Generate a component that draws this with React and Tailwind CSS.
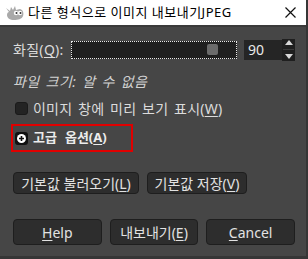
import React from 'react';

const font = "font-['Noto_Sans','Noto_Sans_CJK_KR',sans-serif]";

const U = ({ children }) => <span className="underline underline-offset-2">{children}</span>;

const Wilber = () => (
  <svg width="20" height="16" viewBox="0 0 20 16" className="shrink-0">
    <path d="M1 3 L5 6 L6 2 L8 5 L10 1 L11 5 L15 4 C18 5 19 8 18 11 C17 14 13 15 9 15 C5 15 2 13 2 10 C2 8 3 7 4 7 Z" fill="#a9a9a9" />
    <circle cx="11" cy="8" r="2.2" fill="#fff" />
    <circle cx="15" cy="8" r="2.2" fill="#fff" />
    <circle cx="11.5" cy="8" r="1" fill="#333" />
    <circle cx="15.5" cy="8" r="1" fill="#333" />
  </svg>
);

const Btn = ({ children, className = '' }) => (
  <button className={`flex items-center justify-center bg-[#2d2d2d] border border-[#1e1e1e] rounded-[4px] text-[#e2e2e2] text-[14px] ${className}`}>
    {children}
  </button>
);

export default function App() {
  return (
    <div className={`w-[308px] h-[259px] flex flex-col bg-[#464646] border-r-2 border-b-[3px] border-[#363636] overflow-hidden ${font}`}>
      {/* title bar */}
      <div className="h-[25px] shrink-0 bg-white flex items-center pl-[5px] pr-[10px] border-b-2 border-[#3a3a3a] box-content">
        <Wilber />
        <span className="ml-[3px] text-[13px] tracking-[0.5px] text-black leading-none whitespace-nowrap">다른 형식으로 이미지 내보내기JPEG</span>
        <svg width="11" height="11" viewBox="0 0 11 11" className="ml-auto">
          <path d="M0.5 0.5 L10.5 10.5 M10.5 0.5 L0.5 10.5" stroke="#111" strokeWidth="1.2" />
        </svg>
      </div>

      <div className="flex flex-col pl-[13px] pr-[11px] pt-[12px] text-[#dcdcdc] text-[14px]">
        {/* quality */}
        <div className="flex items-center h-[21px]">
          <span className="w-[58px] tracking-[0.3px] whitespace-nowrap">화질(<U>Q</U>):</span>
          <div className="w-[166px] h-[18px] border border-dotted border-[#e8e8e8] bg-[#1f1f1f] flex items-center">
            <div className="ml-[135px] w-[11px] h-[11px] rounded-[2px] bg-[#6b6b6b]" />
          </div>
          <div className="ml-[7px] flex h-[22px]">
            <div className="w-[38px] h-[20px] mt-[1px] bg-[#252525] text-[#eaeaea] text-[14px] pl-[4px] flex items-center">90</div>
            <div className="w-[13px] bg-[#1f1f1f] flex flex-col items-center justify-center gap-[4px]">
              <svg width="8" height="5" viewBox="0 0 8 5"><path d="M0 5 L4 0 L8 5 Z" fill="#d8d8d8" /></svg>
              <div className="w-[11px] h-px bg-[#3a3a3a]" />
              <svg width="8" height="5" viewBox="0 0 8 5"><path d="M0 0 L4 5 L8 0 Z" fill="#d8d8d8" /></svg>
            </div>
          </div>
        </div>

        {/* file size */}
        <div className="mt-[12px] h-[18px] flex items-center italic text-[#d2d2d2] tracking-[0.4px] [word-spacing:2px]">파일 크기: 알 수 없음</div>

        {/* preview checkbox */}
        <div className="mt-[9px] h-[18px] flex items-center">
          <div className="ml-[2px] w-[13px] h-[13px] rounded-[3px] bg-[#232323] border border-[#1a1a1a]" />
          <span className="ml-[5px] tracking-[0.2px] [word-spacing:2px] whitespace-nowrap">이미지 창에 미리 보기 표시(<U>W</U>)</span>
        </div>

        {/* advanced expander */}
        <div className="mt-[7px] -ml-[2px] w-[122px] h-[28px] border-2 border-[#e00000] flex items-center text-[13px] font-bold text-[#ececec]">
          <div className="ml-[2px] w-[13px] h-[13px] rounded-[3px] bg-[#111] flex items-center justify-center">
            <div className="w-[9px] h-[9px] rounded-full bg-white flex items-center justify-center">
              <svg width="5" height="5" viewBox="0 0 5 5"><path d="M2.5 0 V5 M0 2.5 H5" stroke="#111" strokeWidth="1.6" /></svg>
            </div>
          </div>
          <span className="ml-[5px] whitespace-nowrap">고급</span>
          <span className="ml-[8px] whitespace-nowrap">옵션(<U>A</U>)</span>
        </div>

        {/* defaults */}
        <div className="mt-[20px] flex gap-[8px]">
          <Btn className="w-[126px] h-[22px] whitespace-nowrap">기본값 불러오기(<U>L</U>)</Btn>
          <Btn className="w-[100px] h-[22px] whitespace-nowrap">기본값 저장(<U>V</U>)</Btn>
        </div>

        {/* actions */}
        <div className="mt-[25px] grid grid-cols-3 gap-[8px] w-[282px]">
          <Btn className="h-[26px]"><U>H</U>elp</Btn>
          <Btn className="h-[26px]">내보내기(<U>E</U>)</Btn>
          <Btn className="h-[26px]"><U>C</U>ancel</Btn>
        </div>
      </div>
    </div>
  );
}
